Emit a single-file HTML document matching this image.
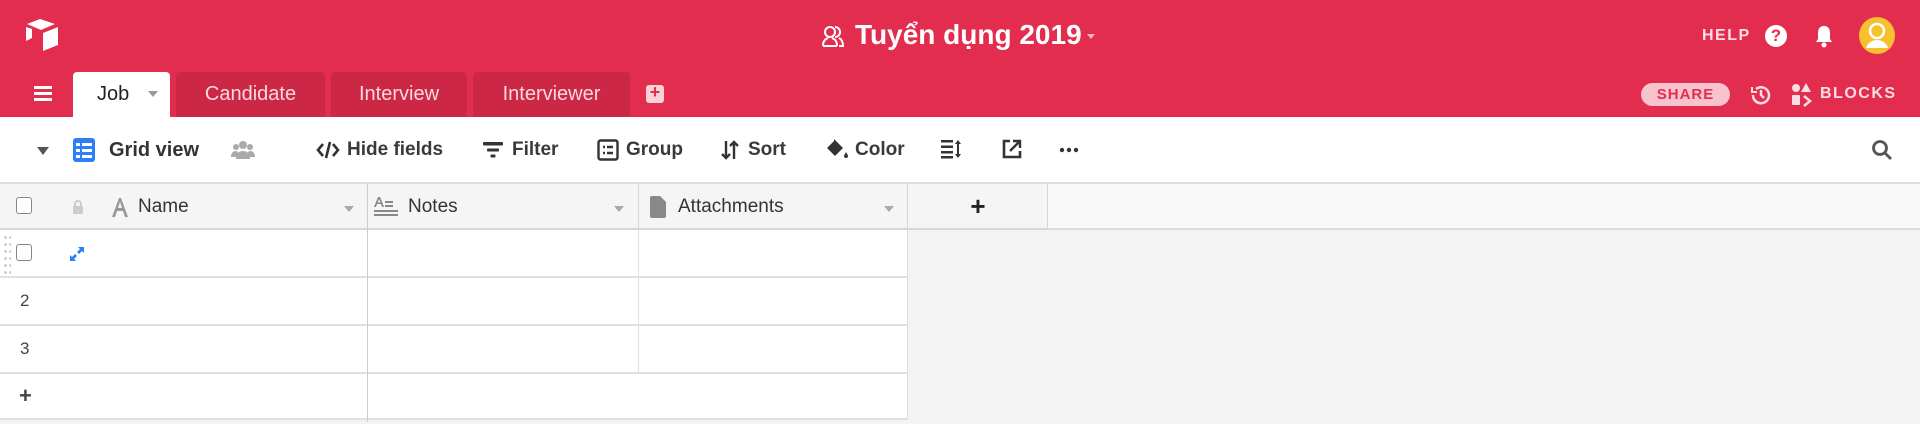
<!DOCTYPE html>
<html><head><meta charset="utf-8"><style>
*{box-sizing:border-box;margin:0;padding:0}
body{width:1920px;height:424px;overflow:hidden;background:#f3f3f3;font-family:"Liberation Sans",sans-serif;position:relative;color:#333}
.a{position:absolute}
#top{left:0;top:0;width:1920px;height:117px;background:#e32d4f}
.tab{position:absolute;top:72px;height:45px;border-radius:4px 4px 0 0;background:#cc2745;color:#fbd9df;font-size:20px;line-height:45px;text-align:center}
.tb{position:absolute;top:138px;font-size:19px;font-weight:bold;color:#3a3a3a;line-height:24px}
.hd{position:absolute;top:184px;height:46px;background:#f5f5f5;border-right:1px solid #d6d6d6;border-bottom:2px solid #d6d6d6}
.hl{position:absolute;font-size:19px;color:#333;top:12px}
.row{position:absolute;left:0;width:908px;height:48px;background:#fff;border-bottom:2px solid #e0e0e0}
.row .c{position:absolute;left:367px;top:0;width:1px;height:48px;background:#ccc}
.row .c2{position:absolute;left:638px;top:0;width:1px;height:48px;background:#e0e0e0}
.num{position:absolute;left:20px;top:13px;font-size:17px;color:#444}
.caret{position:absolute;width:0;height:0;border-left:5px solid transparent;border-right:5px solid transparent;border-top:6px solid #aaa}
</style></head><body>
<div id="top" class="a"></div>
<svg class="a" style="left:24px;top:18px" width="36" height="34" viewBox="0 0 36 34"><path d="M16 1 L3 6 L17 12 L31 6 Z" fill="#fff"/><path d="M2 9 V23 L8 20 V11 Z" fill="#fff"/><path d="M19 15 V33 L34 27 V9 Z" fill="#fff"/></svg>
<svg class="a" style="left:820px;top:24px" width="26" height="26" viewBox="0 0 26 26" fill="none" stroke="#fff" stroke-width="2"><circle cx="10" cy="8" r="5"/><path d="M3 22 c0-6 3-7 5-8 M17 22 c0-6-3-7-5-8 M3 22h14"/><path d="M15 3a5 5 0 0 1 0 10 M19 14c2 1 4 3 4 8h-4"/></svg>
<div class="a" style="left:855px;top:19px;font-size:28px;font-weight:bold;color:#fff;font-family:'Liberation Sans','Noto Sans CJK SC',sans-serif">Tuyển dụng 2019</div>
<div class="caret" style="left:1087px;top:34px;border-top-color:#f6b9c5;border-left-width:4px;border-right-width:4px;border-top-width:5px"></div>
<div class="a" style="left:1702px;top:27px;font-size:16px;font-weight:bold;color:#fbdde3;letter-spacing:1.5px">HELP</div>
<div class="a" style="left:1765px;top:25px;width:22px;height:22px;border-radius:50%;background:#fff;color:#e32d4f;font-size:17px;font-weight:bold;text-align:center;line-height:22px">?</div>
<svg class="a" style="left:1814px;top:24px" width="20" height="24" viewBox="0 0 20 24"><path d="M10 2c-4 0-6 3-6 7v6l-2 3h16l-2-3V9c0-4-2-7-6-7z" fill="#fff"/><circle cx="10" cy="21" r="2.5" fill="#fff"/></svg>
<div class="a" style="left:1859px;top:17px;width:36px;height:37px;border-radius:50%;background:#f6c02e"></div>
<svg class="a" style="left:1859px;top:17px" width="36" height="37" viewBox="0 0 36 37"><circle cx="18" cy="14" r="7" fill="none" stroke="#fff" stroke-width="2.5"/><path d="M7 31c2-6 7-8 11-8s9 2 11 8" fill="#fff"/></svg>
<div class="a" style="left:34px;top:86px;width:18px;height:3px;background:#fff;box-shadow:0 6px 0 #fff,0 12px 0 #fff"></div>
<div class="tab" style="left:73px;width:97px;background:#fff;color:#222;text-align:left;padding-left:24px">Job</div>
<div class="caret" style="left:148px;top:91px;border-top-color:#999"></div>
<div class="tab" style="left:176px;width:149px">Candidate</div>
<div class="tab" style="left:331px;width:136px">Interview</div>
<div class="tab" style="left:473px;width:157px">Interviewer</div>
<div class="a" style="left:646px;top:85px;width:18px;height:18px;border-radius:3px;background:#f9d1d9"></div>
<div class="a" style="left:646px;top:82px;width:18px;text-align:center;font-size:18px;font-weight:bold;color:#e32d4f">+</div>
<div class="a" style="left:1641px;top:83px;width:89px;height:23px;border-radius:12px;background:#f7c4ce;color:#e32d4f;font-size:15px;font-weight:bold;text-align:center;line-height:23px;letter-spacing:1px">SHARE</div>
<svg class="a" style="left:1749px;top:83px" width="24" height="24" viewBox="0 0 24 24" fill="none" stroke="#fbdde3" stroke-width="2.5"><path d="M4 12a8 8 0 1 0 3-6"/><path d="M3 4v5h5" stroke-width="2"/><path d="M12 7v5l3 3"/></svg>
<svg class="a" style="left:1790px;top:82px" width="24" height="26" viewBox="0 0 24 26" fill="#fbdde3"><circle cx="6" cy="6" r="4"/><path d="M16 1l5 9h-10z"/><rect x="2" y="13" width="8" height="10" rx="1"/><path d="M14 14l6 5-6 5" fill="none" stroke="#fbdde3" stroke-width="2.5"/></svg>
<div class="a" style="left:1820px;top:85px;font-size:16px;font-weight:bold;color:#fbdde3;letter-spacing:1.5px">BLOCKS</div>
<div class="a" style="left:0;top:117px;width:1920px;height:67px;background:#fff;border-bottom:2px solid #ddd"></div>
<div class="caret" style="left:37px;top:147px;border-top-color:#555;border-left-width:6px;border-right-width:6px;border-top-width:8px"></div>
<svg class="a" style="left:73px;top:138px" width="22" height="24" viewBox="0 0 22 24"><rect x="0" y="0" width="22" height="24" rx="3" fill="#2d7ff9"/><g fill="#fff"><rect x="3" y="5" width="4" height="3"/><rect x="9" y="5" width="10" height="3"/><rect x="3" y="11" width="4" height="3"/><rect x="9" y="11" width="10" height="3"/><rect x="3" y="17" width="4" height="3"/><rect x="9" y="17" width="10" height="3"/></g></svg>
<div class="tb" style="left:109px;font-size:20px;color:#333">Grid view</div>
<svg class="a" style="left:231px;top:140px" width="24" height="20" viewBox="0 0 24 20" fill="#aaa"><circle cx="12" cy="5" r="4"/><circle cx="5" cy="7" r="3"/><circle cx="19" cy="7" r="3"/><path d="M5 19c0-6 3-8 7-8s7 2 7 8z"/><path d="M0 17c0-4 2-6 5-6s2 6 2 6zM24 17c0-4-2-6-5-6s-2 6-2 6z"/></svg>
<svg class="a" style="left:316px;top:141px" width="24" height="18" viewBox="0 0 24 18" fill="none" stroke="#333" stroke-width="2.6"><path d="M7 3L2 9l5 6M17 3l5 6-5 6M14 1L10 17"/></svg>
<div class="tb" style="left:347px">Hide fields</div>
<svg class="a" style="left:483px;top:141px" width="20" height="18" viewBox="0 0 20 18" fill="#333"><rect x="0" y="1" width="20" height="3.5" rx="1"/><rect x="4" y="7.5" width="12" height="3" rx="1"/><rect x="7.5" y="13.5" width="5" height="3" rx="1"/></svg>
<div class="tb" style="left:512px">Filter</div>
<svg class="a" style="left:597px;top:139px" width="22" height="22" viewBox="0 0 22 22" fill="none" stroke="#333" stroke-width="2.4"><rect x="1.5" y="1.5" width="19" height="19" rx="2"/><path d="M6 8h2M10 8h6M6 14h2M10 14h6"/></svg>
<div class="tb" style="left:626px">Group</div>
<svg class="a" style="left:721px;top:140px" width="18" height="20" viewBox="0 0 18 20" fill="none" stroke="#333" stroke-width="2.4"><path d="M5 1v17M1 14l4 4 4-4M13 19V2M9 6l4-4 4 4"/></svg>
<div class="tb" style="left:748px">Sort</div>
<svg class="a" style="left:825px;top:138px" width="24" height="22" viewBox="0 0 24 22" fill="#333"><path d="M9 1l9 9-8 8-8-8 7-7z"/><path d="M21 14c-1 2-2 3-2 4a2 2 0 0 0 4 0c0-1-1-2-2-4z"/></svg>
<div class="tb" style="left:855px">Color</div>
<svg class="a" style="left:941px;top:139px" width="22" height="20" viewBox="0 0 22 20" fill="#333"><rect x="0" y="1" width="12" height="2.5"/><rect x="0" y="6.5" width="12" height="2.5"/><rect x="0" y="12" width="12" height="2.5"/><rect x="0" y="17" width="12" height="2.5"/><path d="M17 1l-3 4h6zM17 19l-3-4h6z"/><rect x="16" y="4" width="2" height="12"/></svg>
<svg class="a" style="left:1002px;top:139px" width="20" height="20" viewBox="0 0 20 20" fill="none" stroke="#333" stroke-width="2.6"><path d="M8 2H2v16h16v-6"/><path d="M8 12L17 3M11 2h7v7" stroke-width="2.4"/></svg>
<svg class="a" style="left:1059px;top:147px" width="20" height="6" viewBox="0 0 20 6" fill="#333"><circle cx="3" cy="3" r="2.2"/><circle cx="10" cy="3" r="2.2"/><circle cx="17" cy="3" r="2.2"/></svg>
<svg class="a" style="left:1871px;top:139px" width="22" height="22" viewBox="0 0 22 22" fill="none" stroke="#555" stroke-width="2.8"><circle cx="9" cy="9" r="6.5"/><path d="M14 14l6 6"/></svg>
<div class="a" style="left:0;top:184px;width:1920px;height:46px;background:#f9f9f9;border-bottom:2px solid #ddd"></div>
<div class="hd" style="left:0;width:368px;border-right:1px solid #ccc"></div>
<div class="hd" style="left:368px;width:271px"></div>
<div class="hd" style="left:639px;width:269px"></div>
<div class="hd" style="left:908px;width:140px"></div>
<div class="a" style="left:16px;top:197px;width:16px;height:17px;border:1.5px solid #888;border-radius:3px;background:#fff"></div>
<svg class="a" style="left:72px;top:200px" width="12" height="14" viewBox="0 0 12 14"><path d="M3 6V4a3 3 0 0 1 6 0v2" fill="none" stroke="#ccc" stroke-width="2"/><rect x="1" y="6" width="10" height="8" rx="1" fill="#ccc"/></svg>
<svg class="a" style="left:111px;top:197px" width="18" height="20" viewBox="0 0 18 20"><path d="M1 20L8 1h2l7 19h-3l-2-6H6l-2 6zM7 11h4L9 5z" fill="#999"/></svg>
<div class="hl" style="left:138px;top:196px">Name</div>
<div class="caret" style="left:344px;top:206px"></div>
<svg class="a" style="left:374px;top:196px" width="26" height="22" viewBox="0 0 26 22" fill="#888"><path d="M0 11L4 1h2l4 10H8L7 8H3l-1 3zM3.5 6.5h3L5 3z"/><rect x="11" y="5" width="8" height="2"/><rect x="11" y="9" width="8" height="2"/><rect x="0" y="14" width="24" height="2"/><rect x="0" y="18" width="24" height="2"/></svg>
<div class="hl" style="left:408px;top:196px">Notes</div>
<div class="caret" style="left:614px;top:206px"></div>
<svg class="a" style="left:650px;top:196px" width="16" height="22" viewBox="0 0 16 22"><path d="M2 0h8l6 6v14a2 2 0 0 1-2 2H2a2 2 0 0 1-2-2V2a2 2 0 0 1 2-2z" fill="#888"/></svg>
<div class="hl" style="left:678px;top:196px">Attachments</div>
<div class="caret" style="left:884px;top:206px"></div>
<div class="a" style="left:908px;top:191px;width:140px;text-align:center;font-size:26px;font-weight:bold;color:#222">+</div>
<div class="row" style="top:230px"><div class="c"></div><div class="c2"></div>
<div class="a" style="left:3px;top:4px;width:8px;height:40px;background-image:radial-gradient(circle,#ccc 1.3px,transparent 1.5px);background-size:5px 7px"></div>
<div class="a" style="left:16px;top:14px;width:16px;height:17px;border:1.5px solid #888;border-radius:3px"></div>
<svg class="a" style="left:69px;top:16px" width="16" height="16" viewBox="0 0 16 16" fill="#2d7ff9"><path d="M9 1h6v6l-2-2-3 3-2-2 3-3zM7 15H1V9l2 2 3-3 2 2-3 3z"/></svg>
</div>
<div class="row" style="top:278px"><div class="c"></div><div class="c2"></div><div class="num">2</div></div>
<div class="row" style="top:326px"><div class="c"></div><div class="c2"></div><div class="num">3</div></div>
<div class="row" style="top:374px;height:46px"><div class="c"></div><div class="num" style="font-size:22px;font-weight:bold;top:9px;left:19px">+</div></div>
<div class="a" style="left:907px;top:230px;width:1px;height:190px;background:#ddd"></div>
</body></html>
